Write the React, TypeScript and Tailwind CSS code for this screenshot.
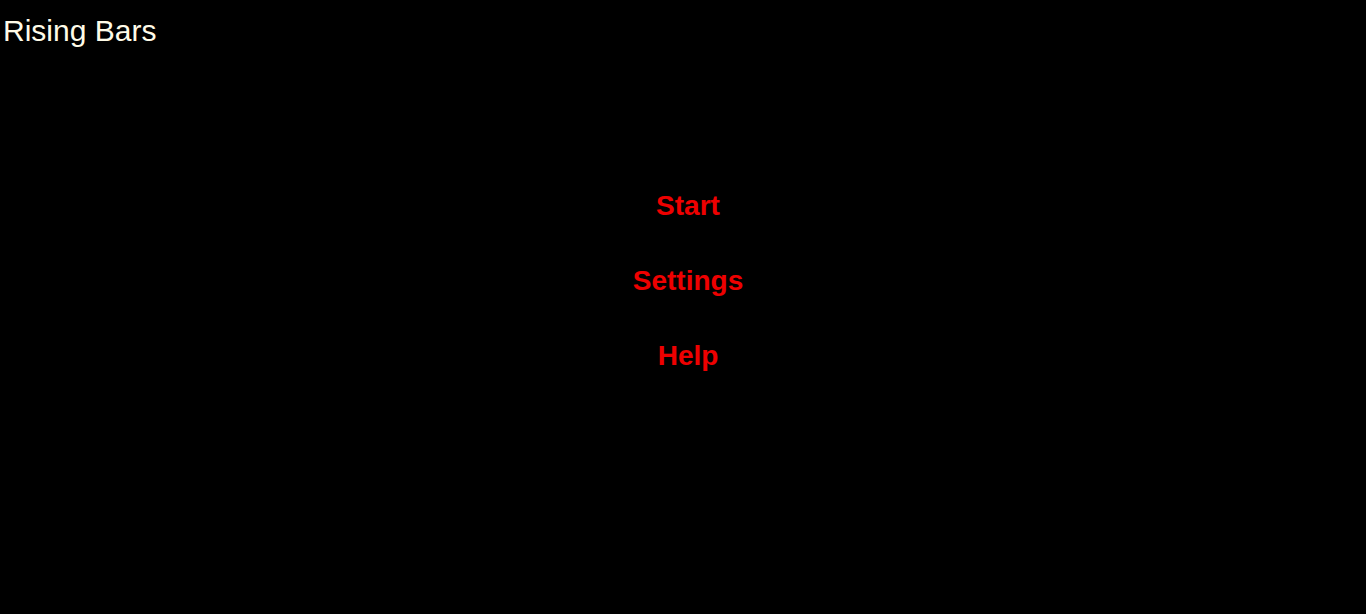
export default function App() {
  const items = ["Start", "Settings", "Help"];

  return (
    <div className="min-h-[614px] w-full bg-black" style={{ fontFamily: '"Liberation Sans", Arial, sans-serif' }}>
      <h1 className="pl-[3px] pt-[14px] text-[30px] leading-[34px] text-[#fffbe8]">Rising Bars</h1>
      <ul className="mt-[142px] flex flex-col items-center gap-[43px] pl-[10px]">
        {items.map((item) => (
          <li key={item}>
            <button className="cursor-pointer text-[28px] font-bold leading-[32px] text-[#ee0000]">{item}</button>
          </li>
        ))}
      </ul>
    </div>
  );
}
